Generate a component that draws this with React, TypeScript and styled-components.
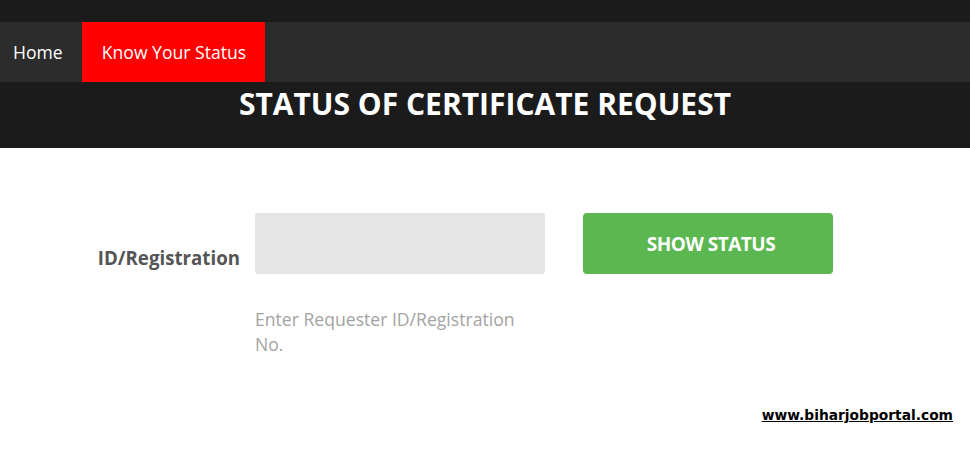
import React from "react";
import styled, { createGlobalStyle } from "styled-components";

const Global = createGlobalStyle`
  html, body { margin: 0; padding: 0; background: #fff; }
  body { font-family: "Open Sans", "Liberation Sans", sans-serif; }
  * { box-sizing: border-box; }
`;

const Page = styled.div`
  width: 970px;
  height: 455px;
  overflow: hidden;
  position: relative;
  background: #fff;
`;

const TopStrip = styled.div`
  height: 22px;
  background: #1b1b1c;
`;

const Nav = styled.nav`
  height: 60px;
  background: #2c2c2c;
  display: flex;
  align-items: stretch;
`;

const NavItem = styled.a<{ $active?: boolean; $pl: number; $pr: number }>`
  display: flex;
  align-items: center;
  padding: 0 ${(p) => p.$pr}px 0 ${(p) => p.$pl}px;
  color: #fff;
  font-size: 17.6px;
  text-decoration: none;
  background: ${(p) => (p.$active ? "#ff0000" : "transparent")};
`;

const Header = styled.header`
  height: 66px;
  background: #1b1b1c;
  display: flex;
  justify-content: center;
  padding-top: 2px;
`;

const Title = styled.h1`
  margin: 0;
  color: #fff;
  font-size: 30px;
  font-weight: 700;
  line-height: 40px;
  letter-spacing: 0;
`;

const Body = styled.main`
  padding: 65px 0 0 93px;
`;

const FormRow = styled.div`
  display: flex;
  align-items: flex-start;
`;

const Label = styled.label`
  width: 147px;
  height: 61px;
  margin-right: 15px;
  display: flex;
  align-items: flex-end;
  padding-bottom: 4px;
  justify-content: flex-end;
  color: #555;
  font-size: 18.7px;
  font-weight: 700;
  white-space: nowrap;
`;

const FieldCol = styled.div`
  display: flex;
  flex-direction: column;
  width: 290px;
  margin-right: 38px;
`;

const Input = styled.div`
  height: 61px;
  background: #e5e5e5;
  border-radius: 3px;
`;

const Help = styled.p`
  margin: 33px 0 0;
  width: 275px;
  color: #a3a3a3;
  font-size: 17.6px;
  line-height: 25px;
`;

const Button = styled.button`
  width: 250px;
  height: 61px;
  border: none;
  border-radius: 4px;
  background: #5bb74f;
  color: #fff;
  font-family: "Open Sans", "Liberation Sans", sans-serif;
  font-size: 19px;
  font-weight: 700;
  letter-spacing: -0.5px;
  padding: 0 0 0 6px;
`;

const Watermark = styled.a`
  position: absolute;
  right: 17px;
  top: 407px;
  font-family: "DejaVu Sans", Verdana, sans-serif;
  font-size: 13.8px;
  font-weight: 700;
  color: #000;
  text-decoration: underline;
`;

export default function App() {
  return (
    <Page>
      <Global />
      <TopStrip />
      <Nav>
        <NavItem $pl={13} $pr={19}>Home</NavItem>
        <NavItem $active $pl={20} $pr={19}>Know Your Status</NavItem>
      </Nav>
      <Header>
        <Title>STATUS OF CERTIFICATE REQUEST</Title>
      </Header>
      <Body>
        <FormRow>
          <Label>ID/Registration</Label>
          <FieldCol>
            <Input />
            <Help>Enter Requester ID/Registration No.</Help>
          </FieldCol>
          <Button>SHOW STATUS</Button>
        </FormRow>
      </Body>
      <Watermark>www.biharjobportal.com</Watermark>
    </Page>
  );
}
